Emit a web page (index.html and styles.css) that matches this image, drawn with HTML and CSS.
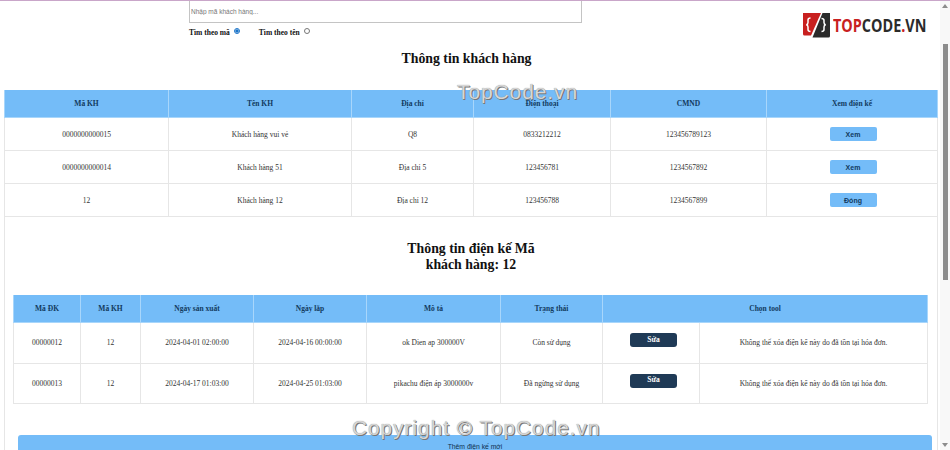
FILE: index.html
```html
<!DOCTYPE html>
<html lang="en">
<head>
    <meta charset="UTF-8">
    <title>Thông tin khách hàng</title>
    <link rel="stylesheet" href="styles.css">
</head>
<body>
    <div class="page">
        <div class="search">
            <input type="text" class="search-input" placeholder="Nhập mã khách hàng...">
            <div class="search-options">
                <label class="option">Tìm theo mã <input type="radio" name="kind" checked></label>
                <label class="option">Tìm theo tên <input type="radio" name="kind"></label>
            </div>
        </div>

        <h2 class="title">Thông tin khách hàng</h2>

        <div class="panel">
            <table class="customers">
                <colgroup>
                    <col class="c-164"><col class="c-183"><col class="c-122"><col class="c-137"><col class="c-156"><col class="c-171">
                </colgroup>
                <thead>
                    <tr>
                        <th>Mã KH</th>
                        <th>Tên KH</th>
                        <th>Địa chỉ</th>
                        <th>Điện thoại</th>
                        <th>CMND</th>
                        <th>Xem điện kế</th>
                    </tr>
                </thead>
                <tbody>
                    <tr>
                        <td>0000000000015</td>
                        <td>Khách hàng vui vẻ</td>
                        <td>Q8</td>
                        <td>0833212212</td>
                        <td>123456789123</td>
                        <td><button class="btn-view">Xem</button></td>
                    </tr>
                    <tr>
                        <td>0000000000014</td>
                        <td>Khách hàng 51</td>
                        <td>Địa chỉ 5</td>
                        <td>123456781</td>
                        <td>1234567892</td>
                        <td><button class="btn-view">Xem</button></td>
                    </tr>
                    <tr>
                        <td>12</td>
                        <td>Khách hàng 12</td>
                        <td>Địa chỉ 12</td>
                        <td>123456788</td>
                        <td>1234567899</td>
                        <td><button class="btn-view">Đóng</button></td>
                    </tr>
                </tbody>
            </table>

            <h2 class="meter-title">Thông tin điện kế Mã<br>khách hàng: 12</h2>

            <table class="meters">
                <colgroup>
                    <col class="c-67"><col class="c-60"><col class="c-113"><col class="c-113"><col class="c-134"><col class="c-102"><col class="c-97"><col class="c-228">
                </colgroup>
                <thead>
                    <tr>
                        <th>Mã ĐK</th>
                        <th>Mã KH</th>
                        <th>Ngày sản xuất</th>
                        <th>Ngày lắp</th>
                        <th>Mô tả</th>
                        <th>Trạng thái</th>
                        <th colspan="2">Chọn tool</th>
                    </tr>
                </thead>
                <tbody>
                    <tr>
                        <td>00000012</td>
                        <td>12</td>
                        <td>2024-04-01 02:00:00</td>
                        <td>2024-04-16 00:00:00</td>
                        <td>ok Dien ap 300000V</td>
                        <td>Còn sử dụng</td>
                        <td><button class="btn-edit">Sửa</button></td>
                        <td>Không thể xóa điện kế này do đã tồn tại hóa đơn.</td>
                    </tr>
                    <tr>
                        <td>00000013</td>
                        <td>12</td>
                        <td>2024-04-17 01:03:00</td>
                        <td>2024-04-25 01:03:00</td>
                        <td>pikachu điện áp 3000000v</td>
                        <td>Đã ngừng sử dụng</td>
                        <td><button class="btn-edit">Sửa</button></td>
                        <td>Không thể xóa điện kế này do đã tồn tại hóa đơn.</td>
                    </tr>
                </tbody>
            </table>

            <button class="btn-add">Thêm điện kế mới</button>
        </div>
    </div>

    <!-- Watermarks from the site the screenshot came from -->
    <div class="logo">
        <svg width="27" height="26" viewBox="0 0 27 26">
            <path d="M0 1H18L8 23.500H1.500Q0 23.500 0 22Z" fill="#c8201f"/>
            <path d="M19.500 1H27V24Q27 25.500 25.500 25.500H9.500Z" fill="#2b2b2b"/>
            <path d="M7.500 6Q5 6 5 8V10.500Q5 12.500 3.300 12.800Q5 13.200 5 15V17.500Q5 19.500 7.500 19.500" stroke="#fff" stroke-width="1.500" fill="none"/>
            <path d="M18.500 6.500Q21 6.500 21 8.500V10.500Q21 12.500 22.700 12.800Q21 13.200 21 15V17.500Q21 19.500 18.500 19.500" stroke="#fff" stroke-width="1.500" fill="none"/>
        </svg>
        <span class="logo-text"><span class="red">TOP</span>CODE<span class="red">.</span>VN</span>
    </div>
    <div class="mark mark-top">TopCode.vn</div>
    <div class="mark mark-bottom">Copyright © TopCode.vn</div>

    <div class="scrollbar">
        <span class="arrow-up"></span>
        <span class="thumb"></span>
        <span class="arrow-down"></span>
    </div>
</body>
</html>
```
FILE: styles.css
```css
html, body {
    height: 100%;
}
body {
    margin: 0;
    font-family: 'Liberation Serif', serif;
    color: #333;
    background-color: #fff;
    overflow: hidden;
}
.page {
    border-top: 1px solid #c9a6c9;
    height: 449px;
    overflow: hidden;
    opacity: 0.999;
}

/* Search box */
.search {
    margin-left: 189px;
    width: 393px;
}
.search-input {
    display: block;
    box-sizing: border-box;
    width: 393px;
    height: 22px;
    padding: 0 1px;
    border: 1px solid #c4c4c4;
    border-top: none;
    font-family: 'Liberation Sans', sans-serif;
    font-size: 6.5px;
    outline: none;
}
.search-input::placeholder {
    color: #777;
}
.search-options {
    display: flex;
    gap: 19px;
    height: 18px;
    align-items: center;
}
.option {
    display: flex;
    align-items: center;
    gap: 4px;
    font-size: 7.5px;
    font-weight: bold;
    color: #111;
}
.option input {
    width: 6px;
    height: 6px;
    margin: 0 0 2px;
    accent-color: #1a73c8;
}

.title {
    margin: 0;
    padding-top: 10px;
    width: 933px;
    height: 39px;
    text-align: center;
    font-size: 13.8px;
    color: #111;
}

/* Bordered area that holds both tables */
.panel {
    margin-left: 4px;
    width: 934px;
    box-sizing: border-box;
    border-left: 1px solid #e6e6e6;
    border-right: 1px solid #e6e6e6;
}

table {
    border-collapse: collapse;
    table-layout: fixed;
    font-size: 7.5px;
    text-align: center;
}
th {
    background-color: #74bcf8;
    color: #123a5e;
    font-weight: bold;
    border: 1px solid #a8d6fb;
    border-top: none;
    padding: 0;
    height: 27px;
}
td {
    border: 1px solid #e6e6e6;
    padding: 0;
}

.c-60 { width: 60px; }
.c-67 { width: 67px; }
.c-97 { width: 97px; }
.c-102 { width: 102px; }
.c-113 { width: 113px; }
.c-122 { width: 122px; }
.c-134 { width: 134px; }
.c-137 { width: 137px; }
.c-156 { width: 156px; }
.c-164 { width: 164px; }
.c-171 { width: 171px; }
.c-183 { width: 183px; }
.c-228 { width: 228px; }

.customers {
    width: 933px;
    margin-left: -1px;
}
.customers td {
    height: 32px;
}

.meter-title {
    margin: 0 auto;
    width: 200px;
    height: 78px;
    padding-top: 24px;
    box-sizing: border-box;
    text-align: center;
    font-size: 13.8px;
    line-height: 16px;
    color: #111;
}

.meters {
    width: 914px;
    margin-left: 8px;
}
.meters td {
    height: 39.5px;
}

.btn-view {
    width: 47px;
    height: 14px;
    margin-left: 2px;
    padding: 0;
    border: none;
    border-radius: 2px;
    background-color: #74bcf8;
    color: #123a5e;
    font-family: 'Liberation Sans', sans-serif;
    font-size: 7px;
    font-weight: bold;
}
.btn-edit {
    display: block;
    margin: 0 0 5px 27px;
    width: 47px;
    height: 14px;
    padding: 0 0 2px;
    border: none;
    border-radius: 3px;
    background-color: #1f3a56;
    color: #fff;
    font-family: 'Liberation Serif', serif;
    font-size: 7.5px;
    font-weight: bold;
}
.btn-add {
    display: block;
    width: 914px;
    height: 30px;
    margin: 31px 0 0 13px;
    padding: 0 0 8px;
    border: none;
    border-radius: 3px;
    background-color: #74bcf8;
    color: #10304e;
    font-family: 'Liberation Sans', sans-serif;
    font-size: 6.8px;
}

/* Logo and watermark text, laid over the page */
.logo {
    position: absolute;
    top: 12px;
    left: 803px;
    display: flex;
    align-items: center;
    gap: 3px;
}
.logo-text {
    font-family: 'Open Sans', sans-serif;
    font-size: 18px;
    font-weight: 700;
    color: #2b2b2b;
    transform: scaleX(0.8);
    transform-origin: left center;
}
.red {
    color: #c8201f;
}
.mark {
    position: absolute;
    font-family: 'Liberation Sans', sans-serif;
    color: #d6d6d6;
    text-shadow: 1px 1px 0 #777, 0 0 1px #888;
    white-space: nowrap;
}
.mark-top {
    top: 80px;
    left: 457px;
    font-size: 21px;
    letter-spacing: 0.9px;
}
.mark-bottom {
    top: 416px;
    left: 352px;
    font-size: 20.8px;
    letter-spacing: 1px;
}

/* Drawn scrollbar */
.scrollbar {
    position: absolute;
    top: 1px;
    right: 0;
    width: 10px;
    height: 449px;
    background-color: #f8f8f8;
}
.thumb {
    position: absolute;
    top: 43px;
    left: 3px;
    width: 5px;
    height: 236px;
    background-color: #8c8c8c;
}
.arrow-up, .arrow-down {
    position: absolute;
    left: 2px;
    border-left: 3.5px solid transparent;
    border-right: 3.5px solid transparent;
}
.arrow-up {
    top: 3px;
    border-bottom: 4px solid #8c8c8c;
}
.arrow-down {
    bottom: 3px;
    border-top: 4px solid #8c8c8c;
}
```
